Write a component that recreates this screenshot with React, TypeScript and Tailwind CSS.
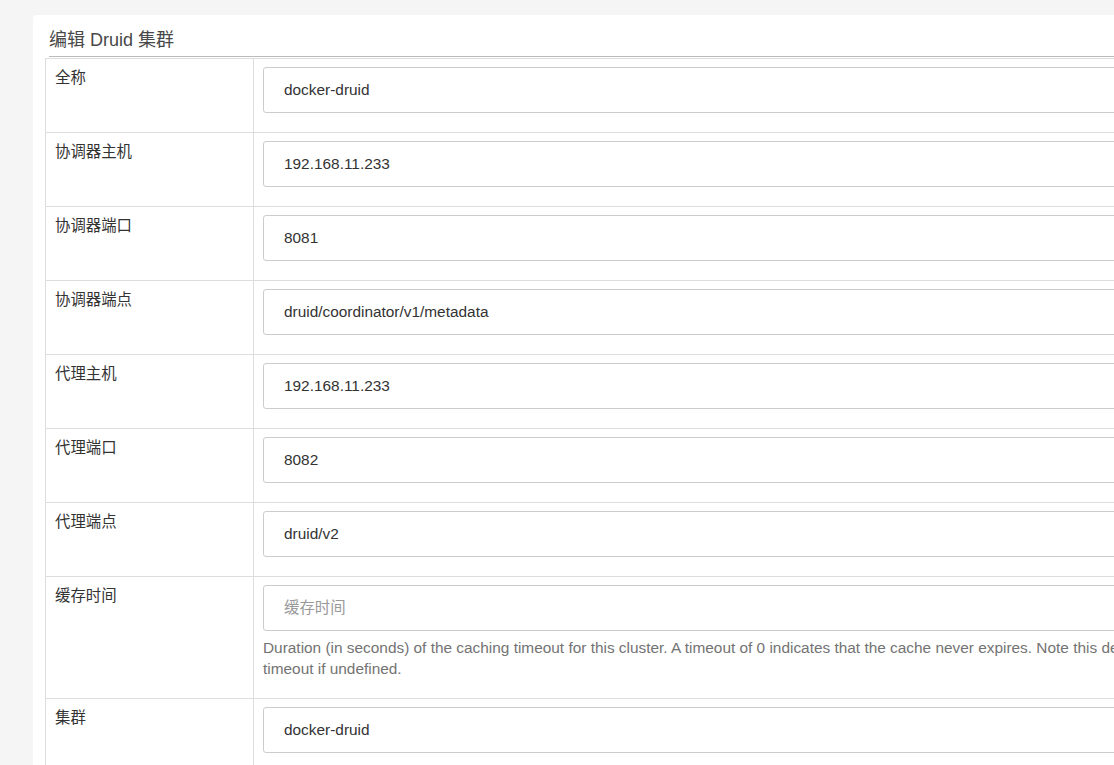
import React from "react";

const rows: { label: string; value?: string; placeholder?: string; help?: string }[] = [
  { label: "全称", value: "docker-druid" },
  { label: "协调器主机", value: "192.168.11.233" },
  { label: "协调器端口", value: "8081" },
  { label: "协调器端点", value: "druid/coordinator/v1/metadata" },
  { label: "代理主机", value: "192.168.11.233" },
  { label: "代理端口", value: "8082" },
  { label: "代理端点", value: "druid/v2" },
  {
    label: "缓存时间",
    placeholder: "缓存时间",
    help:
      "Duration (in seconds) of the caching timeout for this cluster. A timeout of 0 indicates that the cache never expires. Note this defaults to the global timeout if undefined.",
  },
  { label: "集群", value: "docker-druid" },
  { label: "验证", value: "" },
];

export default function App() {
  return (
    <div
      className="w-[1114px] h-[765px] overflow-hidden bg-[#f5f5f5] pt-[15px] pl-[33px]"
      style={{ fontFamily: '"Liberation Sans", "Noto Sans CJK SC", Arial, sans-serif' }}
    >
      <div className="w-[1273px] bg-white rounded-[4px] px-[12px] pb-[20px]">
        <div className="mx-[4px] pt-[12px] pb-[3px] border-b border-[#bbb] text-[18px] leading-[26px] text-[#484848]">
          编辑 Druid 集群
        </div>
        <div className="mt-[1px] border-t border-l border-r border-[#ddd]">
          {rows.map((r, i) => (
            <div key={i} className="flex border-b border-[#ddd]">
              <div className="w-[208px] shrink-0 border-r border-[#ddd] pt-[8px] px-[9px] text-[15.4px] leading-[21px] text-[#333]">
                {r.label}
              </div>
              <div className="flex-1 pt-[8px] px-[9px] pb-[19px]">
                <input
                  readOnly
                  defaultValue={r.value ?? ""}
                  placeholder={r.placeholder}
                  className="block w-full h-[46px] border border-[#ccc] rounded-[3px] px-[20px] text-[15.4px] text-[#333] placeholder:text-[#999] outline-none bg-white"
                />
                {r.help && (
                  <div className="mt-[6px] text-[15.4px] leading-[21px] text-[#737373]">{r.help}</div>
                )}
              </div>
            </div>
          ))}
        </div>
      </div>
    </div>
  );
}
